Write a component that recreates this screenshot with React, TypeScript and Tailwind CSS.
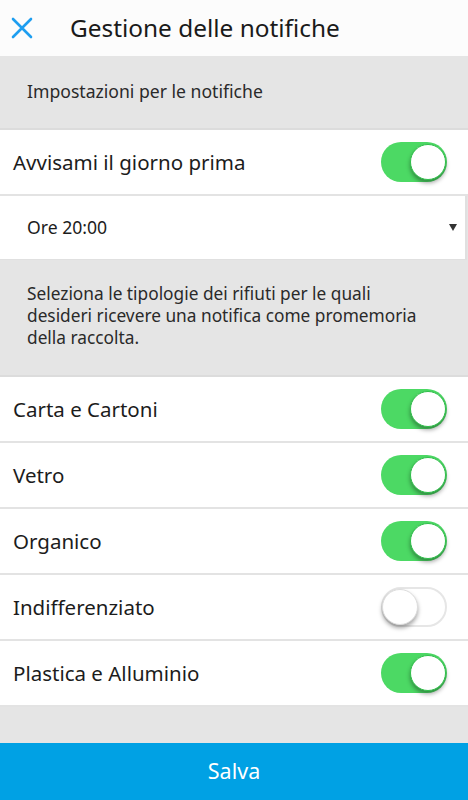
import React from "react";

function Toggle({ on }: { on: boolean }) {
  return on ? (
    <div className="relative w-[66px] h-[40px] rounded-full bg-[#4cd964]">
      <div className="absolute right-[1px] top-[2px] w-[36px] h-[36px] rounded-full bg-white border border-[#2fbf4a] shadow-[0_3px_4px_rgba(0,0,0,0.35)]" />
    </div>
  ) : (
    <div className="relative w-[66px] h-[40px] rounded-full bg-white border-2 border-[#e6e6e6]">
      <div className="absolute left-[-1px] top-[0px] w-[36px] h-[36px] rounded-full bg-white border border-[#dddddd] shadow-[0_3px_4px_rgba(0,0,0,0.35)]" />
    </div>
  );
}

function Row({ label, on }: { label: string; on: boolean }) {
  return (
    <div className="h-[66px] bg-white border-b-2 border-[#e3e3e3] flex items-center justify-between pl-[13px] pr-[21px]">
      <span className="text-[20.5px] text-[#1c1c1c]">{label}</span>
      <Toggle on={on} />
    </div>
  );
}

export default function App() {
  const items: [string, boolean][] = [
    ["Carta e Cartoni", true],
    ["Vetro", true],
    ["Organico", true],
    ["Indifferenziato", false],
    ["Plastica e Alluminio", true],
  ];
  return (
    <div
      className="w-[468px] h-[800px] flex flex-col bg-[#e5e5e5] overflow-hidden"
      style={{ fontFamily: '"Noto Sans", "Open Sans", sans-serif' }}
    >
      <div className="h-[56px] bg-[#fcfcfc] flex items-center">
        <svg width="22" height="22" viewBox="0 0 22 22" className="ml-[11px]">
          <path d="M2 2 L20 20 M20 2 L2 20" stroke="#1e9ef0" strokeWidth="2.6" strokeLinecap="round" />
        </svg>
        <span className="ml-[37px] text-[24.4px] text-[#1a1a1a] leading-none">Gestione delle notifiche</span>
      </div>
      <div className="h-[74px] bg-[#e5e5e5] border-b-2 border-[#dcdcdc] flex items-center pl-[27px] pb-[2px]">
        <span className="text-[17.6px] text-[#2a2a2a]">Impostazioni per le notifiche</span>
      </div>
      <Row label="Avvisami il giorno prima" on={true} />
      <div className="h-[64px] bg-white border-r-2 border-b border-[#e0e0e0] mr-[1px] flex items-center justify-between pl-[27px] pr-[8px]">
        <span className="text-[17.6px] text-[#1c1c1c]">Ore 20:00</span>
        <svg width="8" height="7" viewBox="0 0 8 7">
          <path d="M0 0 H8 L4 7 Z" fill="#333" />
        </svg>
      </div>
      <div className="h-[117px] bg-[#e5e5e5] border-b-2 border-[#dcdcdc] flex items-center pl-[27px] pb-[4px]">
        <p className="w-[400px] text-[17.3px] leading-[22px] text-[#2a2a2a]">
          Seleziona le tipologie dei rifiuti per le quali desideri ricevere una notifica come promemoria della raccolta.
        </p>
      </div>
      {items.map(([l, o]) => (
        <Row key={l} label={l} on={o} />
      ))}
      <div className="flex-1 bg-[#e5e5e5]" />
      <div className="h-[57px] bg-[#00a1e4] flex items-center justify-center">
        <span className="text-[21.5px] text-white">Salva</span>
      </div>
    </div>
  );
}
